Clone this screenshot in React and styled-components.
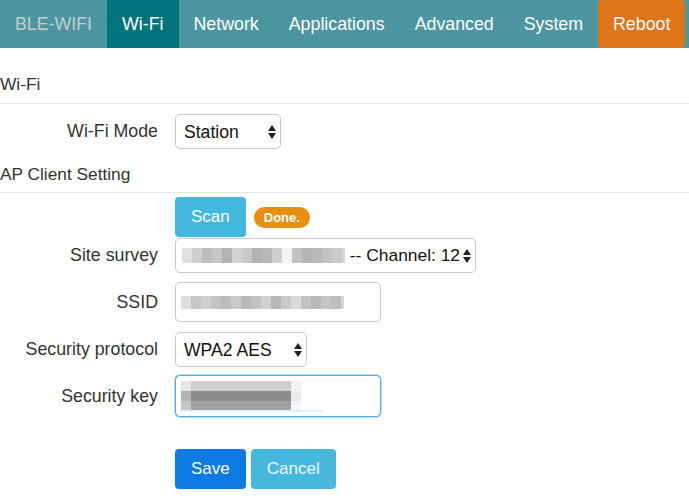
import React from 'react';
import styled, { createGlobalStyle } from 'styled-components';

const Global = createGlobalStyle`
  html, body { margin: 0; padding: 0; background: #fff; }
  body {
    font-family: "Liberation Sans", Arial, Helvetica, sans-serif;
    color: #333;
    overflow: hidden;
  }
`;

const stripes = (colors, w) =>
  `linear-gradient(to right, ${colors
    .map((c, i) => `${c} ${i * w}px ${(i + 1) * w}px`)
    .join(', ')})`;

const Nav = styled.nav`
  display: flex;
  height: 48px;
  background: #4b96a1;
  white-space: nowrap;
`;

const NavItem = styled.a`
  display: flex;
  align-items: center;
  flex-shrink: 0;
  padding: 0 15px;
  font-size: 17.8px;
  text-decoration: none;
  color: ${(p) => (p.$brand ? '#c4cdcf' : '#fff')};
  background: ${(p) => (p.$active ? '#00737b' : p.$danger ? '#e07418' : 'transparent')};
  border-radius: ${(p) => (p.$danger ? '4px' : '0')};
`;

const Main = styled.main`
  display: flex;
  flex-direction: column;
`;

const Legend = styled.div`
  margin-top: ${(p) => p.$mt}px;
  padding-bottom: ${(p) => p.$pb}px;
  font-size: 17.3px;
  line-height: 24px;
  color: #333;
  border-bottom: 1px solid #e5e5e5;
`;

const Row = styled.div`
  display: flex;
  align-items: center;
  gap: 17px;
  margin-top: ${(p) => p.$mt}px;
`;

const Label = styled.label`
  width: 158px;
  flex-shrink: 0;
  text-align: right;
  font-size: 17.8px;
  color: #333;
`;

const Controls = styled.div`
  display: flex;
  align-items: center;
  gap: ${(p) => p.$gap || 0}px;
`;

const SelectBox = styled.div`
  position: relative;
  box-sizing: border-box;
  width: ${(p) => p.$w}px;
  height: 35px;
  border: 1px solid #c9c9c9;
  border-radius: 5px;
  background: #fff;
  overflow: hidden;
`;

const NativeSelect = styled.select`
  appearance: none;
  -webkit-appearance: none;
  width: 100%;
  height: 100%;
  border: none;
  background: transparent;
  padding: 0 0 0 8px;
  margin: 0;
  font-family: inherit;
  font-size: 17.6px;
  color: #111;
  outline: none;
`;

const SelectValue = styled.div`
  display: flex;
  align-items: center;
  height: 100%;
  padding-left: 6px;
  font-size: 17.4px;
  color: #111;
  white-space: nowrap;
`;

const Arrow = styled.svg`
  position: absolute;
  right: 4px;
  top: 50%;
  transform: translateY(-50%);
  pointer-events: none;
`;

const Mosaic = styled.span`
  display: inline-block;
  flex-shrink: 0;
  width: ${(p) => p.$w}px;
  height: ${(p) => p.$h}px;
  background: ${(p) => p.$bg};
`;

const InputBox = styled.div`
  box-sizing: border-box;
  display: flex;
  flex-direction: column;
  justify-content: center;
  width: 206px;
  height: ${(p) => p.$h}px;
  padding-left: 5px;
  border: 1px solid ${(p) => (p.$focus ? '#4ea9e6' : '#c9c9c9')};
  border-radius: 5px;
  background: #fff;
  box-shadow: ${(p) => (p.$focus ? '0 0 0 0.5px #7cc0ee' : 'none')};
`;

const KeyStack = styled.div`
  display: flex;
  flex-direction: column;
  margin-top: 1px;
`;

const Btn = styled.button`
  height: 40px;
  padding: 0 16px;
  border: none;
  border-radius: 4px;
  font-family: inherit;
  font-size: 17px;
  color: ${(p) => (p.$kind === 'muted' ? '#eef6fa' : '#fff')};
  background: ${(p) =>
    p.$kind === 'primary' ? '#0b7be3' : p.$kind === 'muted' ? '#47b8dd' : '#42b8de'};
  cursor: pointer;
`;

const Badge = styled.span`
  display: inline-flex;
  align-items: center;
  height: 21px;
  padding: 0 10px;
  margin-left: 8px;
  border-radius: 11px;
  background: #e88f0d;
  color: #fff;
  font-size: 13px;
  font-weight: bold;
`;

const UpDown = () => (
  <Arrow width="8" height="14" viewBox="0 0 8 14">
    <path d="M0 6 L4 0 L8 6 Z" fill="#222" />
    <path d="M0 8 L8 8 L4 14 Z" fill="#222" />
  </Arrow>
);

const surveyBg = stripes(
  ['#e0e0e0', '#cfcfcf', '#bdbdbd', '#c7c6c6', '#b5b2b2', '#d2d2d2', '#c9c9c9', '#b3b3b3', '#b9b7b7', '#cecfcf', '#f4f4f4', '#c1c1c1', '#b4b4b4', '#b9b9b9', '#c4c3c3', '#cbcbcb', '#d6d6d6'],
  10
);
const ssidBg = stripes(
  ['#dedede', '#c6c6c6', '#d0d0d0', '#c5c3c3', '#bdbdbd', '#cacaca', '#b9b9b9', '#c2c2c2', '#d1d1d1', '#b6b6b6', '#c9c9c9', '#dadada', '#c3c3c3', '#b8b8b8', '#c5c5c5', '#bfbfbf', '#d8d8d8'],
  10
);

export default function App() {
  return (
    <>
      <Global />
      <Nav>
        <NavItem $brand>BLE-WIFI</NavItem>
        <NavItem $active>Wi-Fi</NavItem>
        <NavItem>Network</NavItem>
        <NavItem>Applications</NavItem>
        <NavItem>Advanced</NavItem>
        <NavItem>System</NavItem>
        <NavItem $danger>Reboot</NavItem>
      </Nav>
      <Main>
        <Legend $mt={24} $pb={7}>Wi-Fi</Legend>
        <Row $mt={10}>
          <Label>Wi-Fi Mode</Label>
          <SelectBox $w={106}>
            <NativeSelect defaultValue="station">
              <option value="station">Station</option>
              <option value="ap">AP</option>
            </NativeSelect>
            <UpDown />
          </SelectBox>
        </Row>

        <Legend $mt={13} $pb={6}>AP Client Setting</Legend>
        <Row $mt={4}>
          <Label />
          <Controls>
            <Btn>Scan</Btn>
            <Badge>Done.</Badge>
          </Controls>
        </Row>
        <Row $mt={1}>
          <Label>Site survey</Label>
          <SelectBox $w={301}>
            <SelectValue>
              <Mosaic $w={163} $h={15} $bg={surveyBg} />
              &nbsp;-- Channel: 12
            </SelectValue>
            <UpDown />
          </SelectBox>
        </Row>
        <Row $mt={9}>
          <Label>SSID</Label>
          <InputBox $h={40}>
            <Mosaic $w={163} $h={13} $bg={ssidBg} />
          </InputBox>
        </Row>
        <Row $mt={10}>
          <Label>Security protocol</Label>
          <SelectBox $w={132}>
            <NativeSelect defaultValue="wpa2aes">
              <option value="wpa2aes">WPA2 AES</option>
              <option value="none">None</option>
            </NativeSelect>
            <UpDown />
          </SelectBox>
        </Row>
        <Row $mt={8}>
          <Label>Security key</Label>
          <InputBox $h={42} $focus>
            <KeyStack>
              <Mosaic $w={120} $h={10} $bg={stripes(['#e6e6e6', '#cfcfcf', '#cfcfcf', '#cfcfcf', '#cfcfcf', '#cfcfcf', '#cfcfcf', '#cfcfcf', '#cfcfcf', '#cfcfcf', '#cfcfcf', '#f1f1f1'], 10)} />
              <Mosaic $w={120} $h={10} $bg={stripes(['#b4b4b4', '#8d8d8d', '#8d8d8d', '#8d8d8d', '#8d8d8d', '#8d8d8d', '#8d8d8d', '#8d8d8d', '#8d8d8d', '#8d8d8d', '#8d8d8d', '#e9e9e9'], 10)} />
              <Mosaic $w={120} $h={9} $bg={stripes(['#c6c6c6', '#a2a2a2', '#a2a2a2', '#a2a2a2', '#a2a2a2', '#a2a2a2', '#a2a2a2', '#a2a2a2', '#a2a2a2', '#a2a2a2', '#a2a2a2', '#f5f5f5'], 10)} />
              <Mosaic $w={142} $h={2} $bg="#e3f1fb" />
            </KeyStack>
          </InputBox>
        </Row>
        <Row $mt={32}>
          <Label />
          <Controls $gap={5}>
            <Btn $kind="primary">Save</Btn>
            <Btn $kind="muted">Cancel</Btn>
          </Controls>
        </Row>
      </Main>
    </>
  );
}
